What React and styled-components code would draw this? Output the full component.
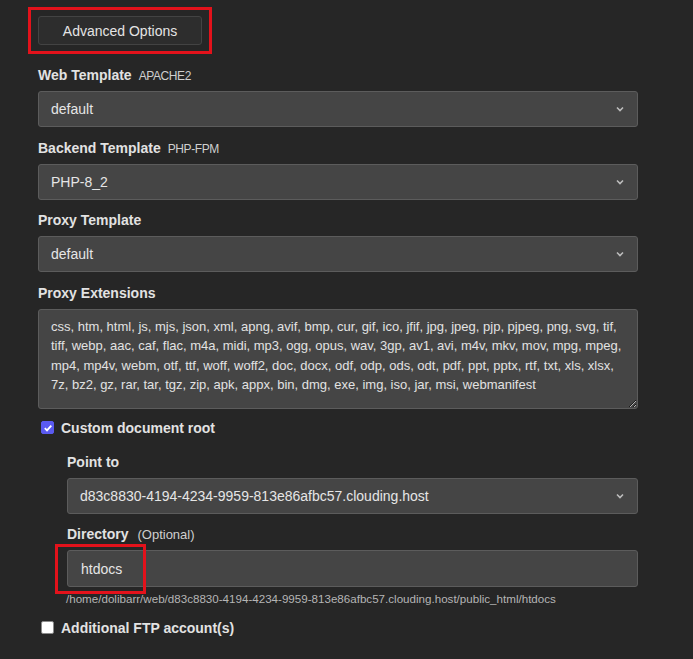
import React from 'react'
import styled, { createGlobalStyle } from 'styled-components'

const GlobalStyle = createGlobalStyle`
  html, body {
    margin: 0;
    padding: 0;
    background: #262626;
  }
  body {
    font-family: "Liberation Sans", Arial, sans-serif;
    color: #dcdcdc;
  }
`;

const Page = styled.div`
  width: 693px;
  min-height: 659px;
  box-sizing: border-box;
  padding: 7px 55px 0 28px;
  background: #262626;
`;

const Highlight = styled.div`
  display: inline-flex;
  border: 3px solid #e3121b;
  padding: 6px 7px;
  box-sizing: border-box;
`;

const OptionsButton = styled.button`
  width: 164px;
  height: 29px;
  background: #2d2d2d;
  border: 1px solid #434343;
  border-radius: 3px;
  color: #e4e4e4;
  font-family: inherit;
  font-size: 14px;
  padding: 0;
`;

const Body = styled.div`
  padding-left: 10px;
  display: flex;
  flex-direction: column;
`;

const Field = styled.div`
  display: flex;
  flex-direction: column;
  margin-top: ${p => p.$top ?? 12.5}px;
`;

const Label = styled.label`
  display: block;
  height: 17px;
  line-height: 17px;
  font-size: 14px;
  font-weight: bold;
  color: #e2e2e2;
  margin-bottom: ${p => p.$below ?? 7}px;
  white-space: nowrap;
`;

const Hint = styled.span`
  margin-left: ${p => p.$gap ?? 3}px;
  font-weight: normal;
  font-size: ${p => (p.$caps ? 12 : 13)}px;
  letter-spacing: ${p => (p.$caps ? '-0.4px' : '0')};
  color: #cfcfcf;
`;

const SelectBox = styled.div`
  height: 36px;
  box-sizing: border-box;
  display: flex;
  align-items: center;
  justify-content: space-between;
  padding: 0 12px;
  background: #454545;
  border: 1px solid #5c5c5c;
  border-radius: 3px;
  font-size: 14px;
  color: #e6e6e6;
`;

const Chevron = styled.svg`
  width: 10px;
  height: 10px;
`;

const TextArea = styled.textarea`
  height: 100px;
  box-sizing: border-box;
  padding: 7px 12px;
  background: #454545;
  border: 1px solid #5c5c5c;
  border-radius: 3px;
  font-family: inherit;
  font-size: 13px;
  line-height: 19.5px;
  color: #e2e2e2;
  resize: vertical;
  overflow: hidden;
  outline: none;
`;

const CheckRow = styled.label`
  display: flex;
  align-items: center;
  gap: 7px;
  height: 17px;
  margin-top: ${p => p.$top ?? 12}px;
  margin-left: 3px;
  font-size: 14px;
  font-weight: bold;
  color: #e2e2e2;
`;

const Box = styled.span`
  width: 13px;
  height: 13px;
  box-sizing: border-box;
  border-radius: 2px;
  display: flex;
  align-items: center;
  justify-content: center;
  background: ${p => (p.$checked ? '#5a5af0' : '#ffffff')};
  border: 1px solid ${p => (p.$checked ? '#5a5af0' : '#8a8a8a')};
`;

const Indented = styled.div`
  padding-left: 29px;
  display: flex;
  flex-direction: column;
`;

const InputWrap = styled.div`
  position: relative;
`;

const TextInput = styled.input`
  width: 100%;
  height: 37px;
  box-sizing: border-box;
  padding: 0 13px;
  background: #454545;
  border: 1px solid #5c5c5c;
  border-radius: 3px;
  font-family: inherit;
  font-size: 14px;
  color: #e6e6e6;
  outline: none;
`;

const RedMark = styled.div`
  position: absolute;
  left: -12px;
  top: -6px;
  width: 91px;
  height: 50px;
  box-sizing: border-box;
  border: 3px solid #e3121b;
  pointer-events: none;
`;

const PathNote = styled.div`
  font-size: 11.6px;
  color: #b5b5b5;
  margin-top: 5px;
  margin-left: -1px;
  line-height: 13px;
`;

const extensions =
  'css, htm, html, js, mjs, json, xml, apng, avif, bmp, cur, gif, ico, jfif, jpg, jpeg, pjp, pjpeg, png, svg, tif, tiff, webp, aac, caf, flac, m4a, midi, mp3, ogg, opus, wav, 3gp, av1, avi, m4v, mkv, mov, mpg, mpeg, mp4, mp4v, webm, otf, ttf, woff, woff2, doc, docx, odf, odp, ods, odt, pdf, ppt, pptx, rtf, txt, xls, xlsx, 7z, bz2, gz, rar, tar, tgz, zip, apk, appx, bin, dmg, exe, img, iso, jar, msi, webmanifest';

const Select = ({ value }) => (
  <SelectBox>
    <span>{value}</span>
    <Chevron viewBox="0 0 10 10">
      <path d="M2 3.5 L5 6.5 L8 3.5" fill="none" stroke="#bdbdbd" strokeWidth="1.6" />
    </Chevron>
  </SelectBox>
);

const Check = ({ checked }) => (
  <Box $checked={checked}>
    {checked && (
      <svg width="10" height="10" viewBox="0 0 10 10">
        <path d="M1.8 5.2 L4 7.4 L8.3 2.6" fill="none" stroke="#fff" strokeWidth="1.8" />
      </svg>
    )}
  </Box>
);

export default function App() {
  return (
    <>
      <GlobalStyle />
      <Page>
        <Highlight>
          <OptionsButton>Advanced Options</OptionsButton>
        </Highlight>
        <Body>
          <Field $top={13}>
            <Label>Web Template<Hint $caps $gap={7}>APACHE2</Hint></Label>
            <Select value="default" />
          </Field>
          <Field>
            <Label>Backend Template<Hint $caps $gap={7}>PHP-FPM</Hint></Label>
            <Select value="PHP-8_2" />
          </Field>
          <Field>
            <Label>Proxy Template</Label>
            <Select value="default" />
          </Field>
          <Field>
            <Label>Proxy Extensions</Label>
            <TextArea defaultValue={extensions} spellCheck={false} />
          </Field>
          <CheckRow $top={10.5}>
            <Check checked />
            Custom document root
          </CheckRow>
          <Indented>
            <Field $top={18}>
              <Label>Point to</Label>
              <Select value="d83c8830-4194-4234-9959-813e86afbc57.clouding.host" />
            </Field>
            <Field $top={12}>
              <Label>Directory<Hint $gap={9}>(Optional)</Hint></Label>
              <InputWrap>
                <TextInput defaultValue="htdocs" />
                <RedMark />
              </InputWrap>
              <PathNote>/home/dolibarr/web/d83c8830-4194-4234-9959-813e86afbc57.clouding.host/public_html/htdocs</PathNote>
            </Field>
          </Indented>
          <CheckRow $top={14}>
            <Check />
            Additional FTP account(s)
          </CheckRow>
        </Body>
      </Page>
    </>
  );
}
